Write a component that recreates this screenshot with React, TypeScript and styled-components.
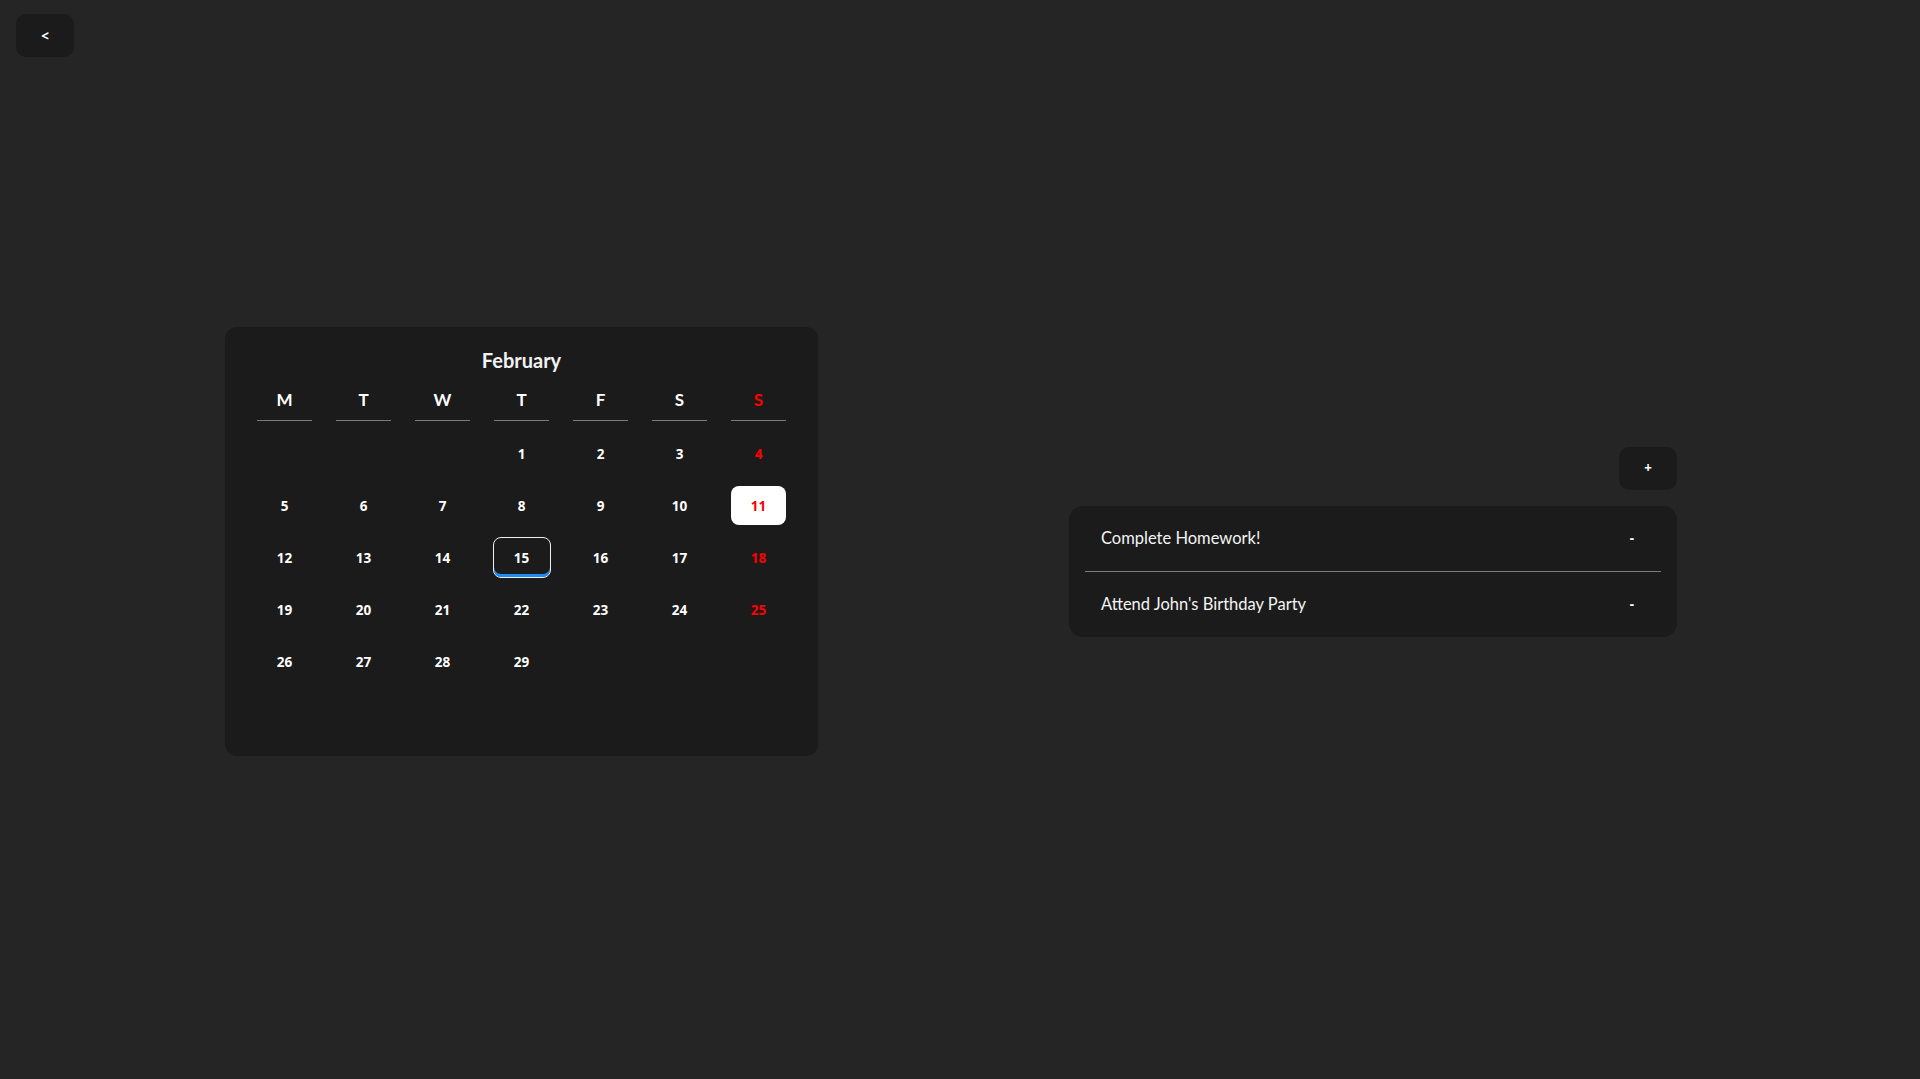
import React from "react";
import styled, { createGlobalStyle } from "styled-components";

const GlobalStyle = createGlobalStyle`
  html, body {
    margin: 0;
    padding: 0;
    background: #252525;
    color: #ffffff;
    font-family: "Lato", "Open Sans", sans-serif;
  }
`;

const Page = styled.div`
  min-height: 1079px;
  box-sizing: border-box;
  padding: 14px 16px 0 16px;
`;

const TopBar = styled.div`
  display: flex;
`;

const DarkButton = styled.button`
  width: 58px;
  height: 43px;
  border: none;
  border-radius: 10px;
  background: #1b1b1b;
  color: #ffffff;
  font-family: "Noto Sans", "Open Sans", sans-serif;
  font-size: 13.33px;
  font-weight: 700;
  display: flex;
  align-items: center;
  justify-content: center;
  padding: 0;
  cursor: pointer;
`;

const Content = styled.main`
  display: flex;
  align-items: center;
  gap: 251px;
  margin-top: 270px;
  padding-left: 209px;
`;

const CalendarCard = styled.section`
  width: 593px;
  box-sizing: border-box;
  background: #1b1b1b;
  border-radius: 12px;
  padding: 21px 32px 23px 32px;
  display: flex;
  flex-direction: column;
`;

const MonthTitle = styled.h2`
  margin: 0;
  text-align: center;
  font-family: "Lato", "Open Sans", sans-serif;
  font-size: 20px;
  font-weight: 700;
  line-height: 24px;
  color: #f2f2f2;
`;

const Grid = styled.div`
  display: grid;
  grid-template-columns: repeat(7, 55px);
  column-gap: 24px;
`;

const HeaderRow = styled(Grid)`
  margin-top: 17px;
`;

const WeekDay = styled.div<{ $red?: boolean }>`
  text-align: center;
  font-size: 17px;
  font-weight: 700;
  line-height: 22px;
  padding-bottom: 9px;
  border-bottom: 1px solid #7b7b7b;
  color: ${(p) => (p.$red ? "#ff0000" : "#ffffff")};
`;

const DaysGrid = styled(Grid)`
  margin-top: 13px;
  grid-template-rows: repeat(6, 39px);
  row-gap: 13px;
`;

const Day = styled.button<{ $red?: boolean; $selected?: boolean; $today?: boolean }>`
  box-sizing: border-box;
  width: ${(p) => (p.$today ? "58px" : "55px")};
  height: ${(p) => (p.$today ? "41px" : "39px")};
  margin: ${(p) => (p.$today ? "-1px -1.5px" : "0")};
  padding: 0;
  border-radius: 8px;
  border: ${(p) => (p.$today ? "1.5px solid #f0f0f0" : "none")};
  box-shadow: ${(p) => (p.$today ? "inset 0 -3px 0 #1e8cf0" : "none")};
  background: ${(p) => (p.$selected ? "#ffffff" : "transparent")};
  color: ${(p) => (p.$red ? "#ff0000" : "#ffffff")};
  font-family: "Noto Sans", "Open Sans", sans-serif;
  font-size: 13.5px;
  font-weight: 700;
  display: flex;
  align-items: center;
  justify-content: center;
  cursor: pointer;
`;

const Empty = styled.div``;

const TaskColumn = styled.section`
  width: 608px;
  display: flex;
  flex-direction: column;
  align-items: flex-end;
  gap: 16px;
`;

const TaskCard = styled.ul`
  list-style: none;
  margin: 0;
  width: 100%;
  box-sizing: border-box;
  padding: 0 16px;
  background: #1b1b1b;
  border-radius: 14px;
`;

const TaskRow = styled.li`
  height: 65px;
  display: flex;
  align-items: center;
  justify-content: space-between;
  padding-left: 16px;
  & + & {
    border-top: 1px solid #7b7b7b;
  }
`;

const TaskText = styled.span`
  font-family: "Lato", "Open Sans", sans-serif;
  font-size: 16.5px;
  font-weight: 400;
  color: #f4f4f4;
`;

const weekDays = ["M", "T", "W", "T", "F", "S", "S"];
const tasks = ["Complete Homework!", "Attend John's Birthday Party"];

export default function App() {
  const offset = 3; // Feb 1 is Thursday
  const cells: (number | null)[] = [];
  for (let i = 0; i < offset; i++) cells.push(null);
  for (let d = 1; d <= 29; d++) cells.push(d);

  return (
    <>
      <GlobalStyle />
      <Page>
        <TopBar>
          <DarkButton>&lt;</DarkButton>
        </TopBar>
        <Content>
          <CalendarCard>
            <MonthTitle>February</MonthTitle>
            <HeaderRow>
              {weekDays.map((w, i) => (
                <WeekDay key={i} $red={i === 6}>
                  {w}
                </WeekDay>
              ))}
            </HeaderRow>
            <DaysGrid>
              {cells.map((d, i) =>
                d === null ? (
                  <Empty key={`e${i}`} />
                ) : (
                  <Day
                    key={d}
                    $red={i % 7 === 6}
                    $selected={d === 11}
                    $today={d === 15}
                  >
                    {d}
                  </Day>
                )
              )}
            </DaysGrid>
          </CalendarCard>
          <TaskColumn>
            <DarkButton>+</DarkButton>
            <TaskCard>
              {tasks.map((t) => (
                <TaskRow key={t}>
                  <TaskText>{t}</TaskText>
                  <DarkButton>-</DarkButton>
                </TaskRow>
              ))}
            </TaskCard>
          </TaskColumn>
        </Content>
      </Page>
    </>
  );
}
